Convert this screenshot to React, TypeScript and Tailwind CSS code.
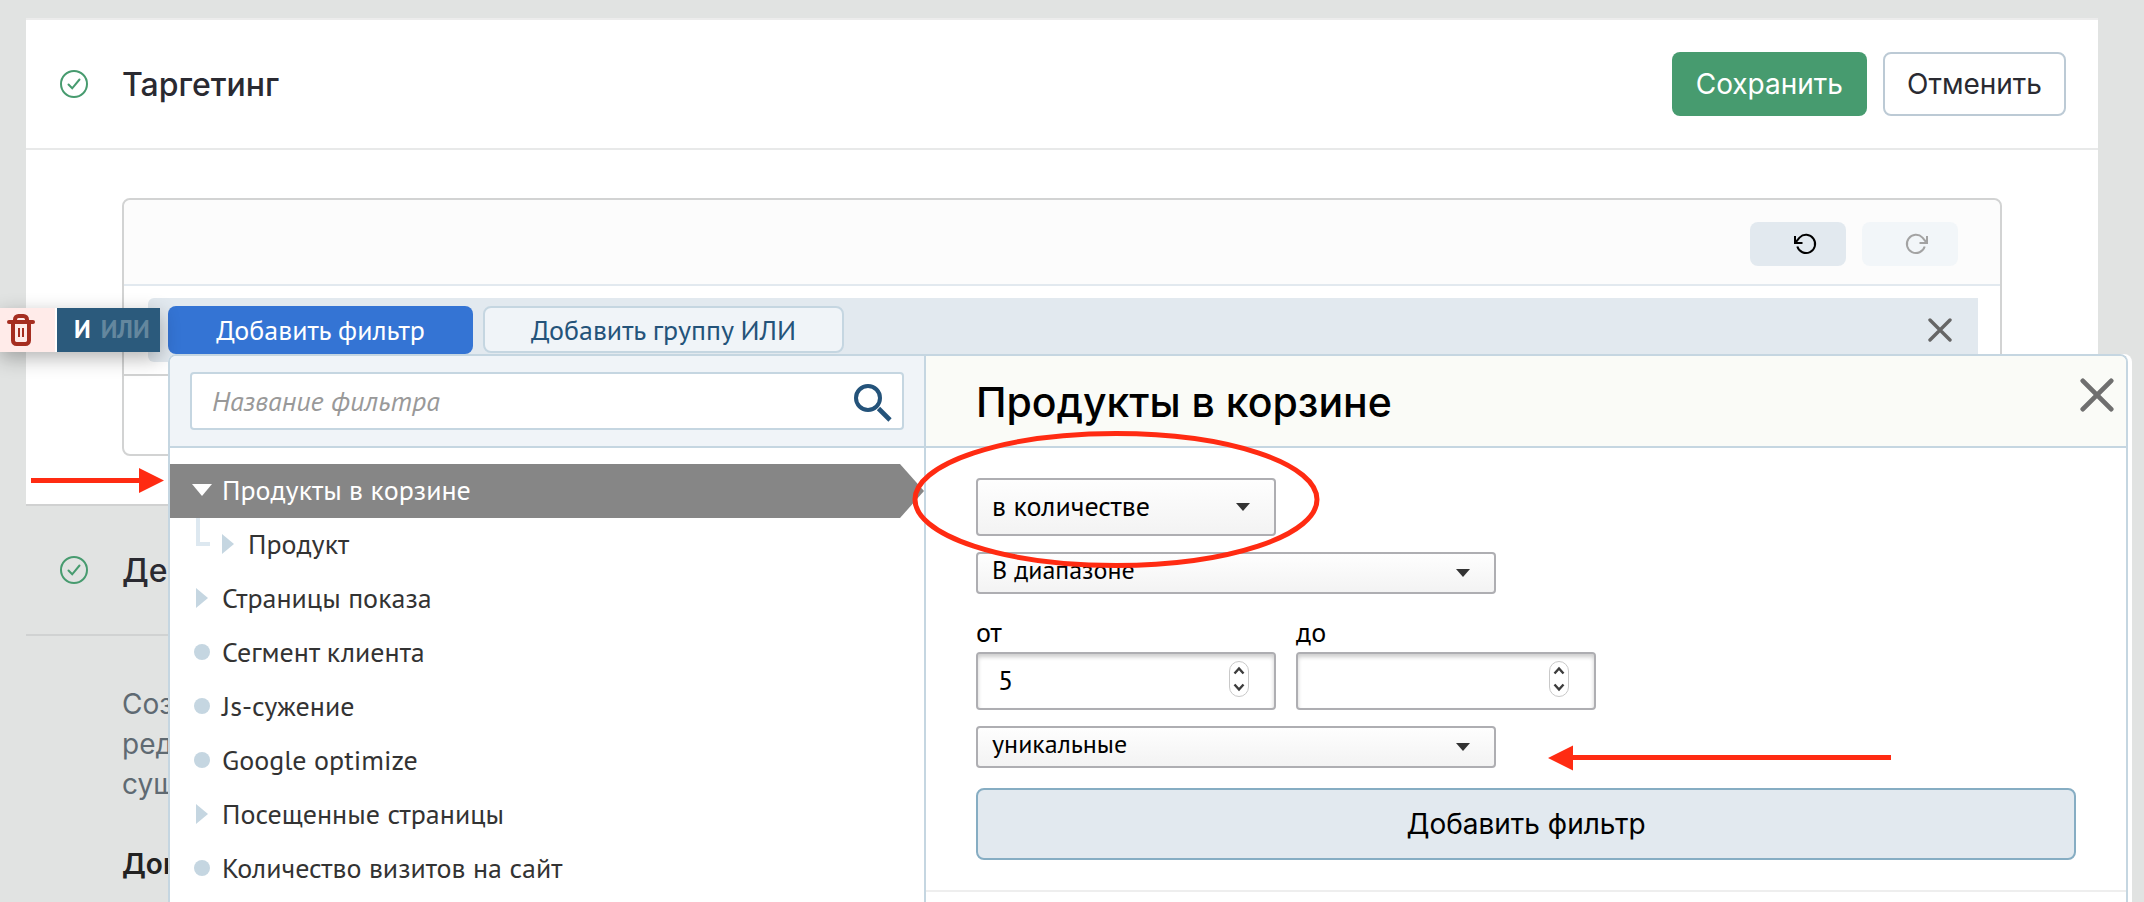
import type { ReactNode } from 'react'
import clsx from 'clsx'

// ============================================================================
// TARGETING PAGE - Filter editor with the filter picker opened
// ============================================================================

type Marker = 'open' | 'closed' | 'leaf'

interface FilterItem {
  id: string
  label: string
  marker: Marker
  nested?: boolean
  selected?: boolean
}

const FILTERS: FilterItem[] = [
  { id: 'cart', label: 'Продукты в корзине', marker: 'open', selected: true },
  { id: 'product', label: 'Продукт', marker: 'closed', nested: true },
  { id: 'pages', label: 'Страницы показа', marker: 'closed' },
  { id: 'segment', label: 'Сегмент клиента', marker: 'leaf' },
  { id: 'js', label: 'Js-сужение', marker: 'leaf' },
  { id: 'optimize', label: 'Google optimize', marker: 'leaf' },
  { id: 'visited', label: 'Посещенные страницы', marker: 'closed' },
  { id: 'visits', label: 'Количество визитов на сайт', marker: 'leaf' },
]

// ---------------------------------------------------------------------------
// Icons
// ---------------------------------------------------------------------------

function CheckCircle() {
  return (
    <svg className="w-7 h-7 shrink-0" viewBox="0 0 28 28" fill="none" stroke="#479b6f" strokeWidth="2">
      <circle cx="14" cy="14" r="13" />
      <path d="M8.5 14.5l3.7 3.8L19.5 9.5" strokeLinecap="round" />
    </svg>
  )
}

function Cross({ className }: { className: string }) {
  return (
    <svg className={className} viewBox="0 0 24 24" fill="none" stroke="currentColor" strokeWidth="3.4" strokeLinecap="round">
      <path d="M2 2l20 20M22 2L2 22" />
    </svg>
  )
}

function RotateIcon({ flipped }: { flipped?: boolean }) {
  return (
    <svg
      className={clsx('w-6 h-6', flipped && '-scale-x-100')}
      viewBox="0 0 24 24"
      fill="none"
      stroke="currentColor"
      strokeWidth="2"
    >
      <path d="M1 4v7h7.5" />
      <path d="M1.5 10.5L5.5 5.6A9.1 9.1 0 1 1 3.3 14.5" />
    </svg>
  )
}

function TrashIcon() {
  return (
    <svg className="w-7 h-8" viewBox="0 0 28 32" fill="none" stroke="#a52d20" strokeWidth="4">
      <path d="M2 8h24" strokeLinecap="round" />
      <path d="M8 8V5.5A3.5 3.5 0 0 1 11.5 2h5A3.5 3.5 0 0 1 20 5.5V8" />
      <path d="M6 9v17.5a3.5 3.5 0 0 0 3.5 3.5h9a3.5 3.5 0 0 0 3.5-3.5V9" />
      <path d="M12 14v9M16 14v9" strokeWidth="2" />
    </svg>
  )
}

function SearchIcon() {
  return (
    <svg className="w-[38px] h-[38px]" viewBox="0 0 38 38" fill="none" stroke="#24537a">
      <circle cx="14" cy="14" r="12" strokeWidth="4" />
      <path d="M24.5 24.5L36 36" strokeWidth="4.6" />
    </svg>
  )
}

function Caret() {
  return (
    <svg className="w-3.5 h-2 pointer-events-none" viewBox="0 0 14 8" fill="#333">
      <path d="M0 0h14L7 8z" />
    </svg>
  )
}

function ItemMarker({ marker }: { marker: Marker }) {
  if (marker === 'leaf') {
    return <span className="w-4 h-4 rounded-full bg-[#c5d6e1]" />
  }

  return (
    <svg className="w-5 h-5" viewBox="0 0 20 20" fill={marker === 'open' ? '#fff' : '#c5d6e1'}>
      {marker === 'open' ? <path d="M0 4h20L10 16z" /> : <path d="M4 0l12 10L4 20z" />}
    </svg>
  )
}

// ---------------------------------------------------------------------------
// Form controls
// ---------------------------------------------------------------------------

interface SelectBoxProps {
  label: string
  value: string
  tall?: boolean
}

function SelectBox({ label, value, tall }: SelectBoxProps) {
  return (
    <div className={clsx('relative flex items-center', tall ? 'w-[300px] h-[58px]' : 'w-[520px] h-[42px]')}>
      <select
        aria-label={label}
        defaultValue={value}
        className={clsx(
          'w-full h-full pl-3.5 appearance-none rounded border-2 border-[#aeaeb2] bg-linear-to-b from-[#fefefe] to-[#f3f3f3] text-black',
          tall ? 'pb-0.5 text-[28px]' : 'pb-1.5 text-[26px] leading-7'
        )}
      >
        <option>{value}</option>
      </select>
      <span className="absolute right-[26px] inset-y-0 flex items-center pointer-events-none">
        <Caret />
      </span>
    </div>
  )
}

function NumberField({ id, label, value }: { id: string; label: string; value: string }) {
  return (
    <div className="w-[300px]">
      <label htmlFor={id} className="block pb-1 text-[28px] leading-8">
        {label}
      </label>
      <div className="relative">
        <input
          id={id}
          type="number"
          defaultValue={value}
          className="block w-full h-[58px] pl-5 pb-1 rounded border-2 border-[#aeaeb2] bg-white text-[28px] shadow-[inset_0_3px_4px_rgba(0,0,0,0.2)] [&::-webkit-inner-spin-button]:appearance-none"
        />
        <svg
          className="absolute right-[26px] top-2 w-[22px] h-[38px] pointer-events-none"
          viewBox="0 0 22 38"
          fill="none"
        >
          <rect x="1.5" y="1.5" width="19" height="35" rx="9.5" fill="#fff" stroke="#c9c9c9" />
          <path d="M6.5 13.5l4.5-5 4.5 5M6.5 24.5l4.5 5 4.5-5" stroke="#3c3c3c" strokeWidth="2.4" />
        </svg>
      </div>
    </div>
  )
}

// ---------------------------------------------------------------------------
// Page sections
// ---------------------------------------------------------------------------

function SectionHeader({ title, children }: { title: string; children?: ReactNode }) {
  return (
    <header className="flex items-center h-[130px] pl-[34px] pr-8 border-b-2 border-[#e8e9e9]">
      <CheckCircle />
      <h2 className="ml-[34px] pt-0.5 text-[32px] font-medium text-[#2a2a31]">{title}</h2>
      {children}
    </header>
  )
}

function TargetingCard() {
  return (
    <section className="bg-white border-t-2 border-t-[#ececec] border-b-2 border-b-[#d0d1d1]">
      <SectionHeader title="Таргетинг">
        <div className="ml-auto flex gap-4 text-[28px]">
          <button type="button" className="h-16 px-6 rounded-lg bg-[#479b6f] text-white">
            Сохранить
          </button>
          <button type="button" className="h-16 px-[22px] rounded-lg border-2 border-[#bccad5] text-[#2a2a31]">
            Отменить
          </button>
        </div>
      </SectionHeader>

      <div className="py-12 px-24">
        <div className="border-2 border-[#d2d3d3] rounded-lg">
          <div className="flex justify-end items-center gap-4 h-[86px] pr-[42px] pt-1 border-b-2 border-[#e2e9ef] bg-[#fcfcfc] rounded-t-lg">
            <button
              type="button"
              aria-label="Отменить действие"
              className="w-24 h-11 pl-4 flex items-center justify-center rounded-lg bg-[#e2e9ef] text-black"
            >
              <RotateIcon />
            </button>
            <button
              type="button"
              aria-label="Повторить действие"
              disabled
              className="w-24 h-11 pl-3 flex items-center justify-center rounded-lg bg-[#f2f6f9] text-[#a3a3a3]"
            >
              <RotateIcon flipped />
            </button>
          </div>

          <div className="py-3 pl-6 pr-[22px] border-b-2 border-[#d2d3d3] font-['PT_Sans','Noto_Sans',sans-serif] text-[28px]">
            <div className="flex items-start gap-2.5 h-16 pt-2 pl-5 pr-[26px] rounded-l-md bg-[#e2e9ef]">
              <button type="button" className="w-[305px] h-12 rounded-lg bg-[#3474d4] text-white">
                Добавить фильтр
              </button>
              <button
                type="button"
                className="w-[361px] h-[47px] rounded-lg border-2 border-[#c5d6e1] bg-[#f0f4f8] text-[#24537a]"
              >
                Добавить группу ИЛИ
              </button>
              <button type="button" aria-label="Удалить" className="ml-auto mt-3 text-[#666]">
                <Cross className="w-6 h-6" />
              </button>
            </div>
          </div>
          <div className="h-[78px]" />
        </div>
      </div>
    </section>
  )
}

function DetailsSection() {
  return (
    <section className="[&_header]:border-[#d0d2d2]">
      <SectionHeader title="Дей" />
      <div className="px-24 pt-12 pb-4 text-[28px] leading-10">
        <p className="text-[#5f6a72]">
          Соз
          <br />
          ред
          <br />
          сущ
        </p>
        <h3 className="mt-10 font-semibold text-[#222]">Доп</h3>
      </div>
    </section>
  )
}

function GroupToolbar() {
  return (
    <div className="absolute left-0 top-[308px] flex h-11 shadow-[0_6px_20px_rgba(0,0,0,0.3)] font-['PT_Sans','Noto_Sans',sans-serif]">
      <button type="button" aria-label="Удалить группу" className="w-[55px] pl-[7px] bg-[#ffebe9]">
        <TrashIcon />
      </button>
      <div className="w-[105px] flex items-center gap-2.5 pl-[17px] border-l-2 border-white bg-[#2b5a7c] text-[25px] font-bold">
        <button type="button" className="text-white">
          И
        </button>
        <button type="button" className="text-[#64879e]">
          ИЛИ
        </button>
      </div>
    </div>
  )
}

// ---------------------------------------------------------------------------
// Filter picker
// ---------------------------------------------------------------------------

function FilterList() {
  return (
    <ul className="pt-4 text-[28px] text-[#333]">
      {FILTERS.map((item) => (
        <li key={item.id} className="relative">
          {item.nested && (
            <span className="absolute left-[26px] top-0 w-3.5 h-7 border-l-4 border-b-4 border-[#dde8f0]" />
          )}
          <button
            type="button"
            className={clsx(
              'flex items-center w-full h-[54px] pb-0.5',
              item.nested ? 'pl-11' : 'pl-[18px]',
              item.selected &&
                'bg-[#868686] text-white [clip-path:polygon(0_0,calc(100%_-_24px)_0,100%_50%,calc(100%_-_24px)_100%,0_100%)]'
            )}
          >
            <span className="w-7 flex justify-center">
              <ItemMarker marker={item.marker} />
            </span>
            <span className="ml-1.5">{item.label}</span>
          </button>
        </li>
      ))}
    </ul>
  )
}

function FilterPicker() {
  return (
    <div className="absolute left-[168px] right-3 top-[354px] bottom-0 pr-1 rounded-t-lg bg-white font-['PT_Sans','Noto_Sans',sans-serif] text-black">
      <div className="flex h-full border-2 border-b-0 border-[#c5d6e1] rounded-t-lg overflow-hidden">
        <aside className="w-[756px] shrink-0 border-r-2 border-[#c5d6e1]">
          <div className="flex items-center h-[92px] px-5 border-b-2 border-[#c5d6e1] bg-[#f0f4f8]">
            <div className="relative w-full">
              <input
                type="search"
                aria-label="Название фильтра"
                placeholder="Название фильтра"
                className="block w-full h-[58px] pl-5 pb-0.5 rounded border-2 border-[#c5d6e1] bg-white text-[28px] placeholder:italic placeholder:text-[#999]"
              />
              <span className="absolute right-3 inset-y-0 pt-1 flex items-center">
                <SearchIcon />
              </span>
            </div>
          </div>
          <FilterList />
        </aside>

        <div className="flex-1">
          <div className="flex items-center justify-between h-[92px] pl-[50px] pr-3 border-b-2 border-[#c5d6e1] bg-[#fafbf7]">
            <h1 className="pt-1 font-['Inter',sans-serif] text-[41px] font-medium">Продукты в корзине</h1>
            <button type="button" aria-label="Закрыть" className="mb-3 text-[#6f6f6f]">
              <Cross className="w-[34px] h-[34px]" />
            </button>
          </div>

          <form className="flex flex-col gap-4 px-[50px] py-[30px] border-b-2 border-[#eee]">
            <SelectBox label="Условие" value="в количестве" tall />
            <SelectBox label="Сравнение" value="В диапазоне" />
            <div className="flex gap-5 pt-1.5">
              <NumberField id="from" label="от" value="5" />
              <NumberField id="to" label="до" value="" />
            </div>
            <SelectBox label="Подсчёт" value="уникальные" />
            <button
              type="button"
              className="w-full h-[72px] mt-1 rounded-lg border-2 border-[#86adc3] bg-[#e2e9ef] font-['Inter',sans-serif] text-[28px]"
            >
              Добавить фильтр
            </button>
          </form>
        </div>
      </div>
    </div>
  )
}

// Red callouts drawn over the page
function Annotations() {
  return (
    <svg
      className="absolute left-0 top-0 pointer-events-none"
      width="1900"
      height="800"
      viewBox="0 0 1900 800"
      fill="none"
      stroke="#ff2b12"
      strokeWidth="5"
    >
      <path d="M31 480.5h110M1891 757.5h-320" />
      <path d="M139 468v25l25-12.5zM1573 745.5v25l-25-12.5z" fill="#ff2b12" stroke="none" />
      <ellipse cx="1116" cy="499.5" rx="201" ry="66" />
    </svg>
  )
}

export default function App() {
  return (
    <div className="relative min-h-screen overflow-hidden bg-[#e1e3e2] font-['Inter',sans-serif]">
      <main className="pt-[18px] pl-[26px] pr-[46px]">
        <TargetingCard />
        <DetailsSection />
      </main>
      <GroupToolbar />
      <FilterPicker />
      <Annotations />
    </div>
  )
}
